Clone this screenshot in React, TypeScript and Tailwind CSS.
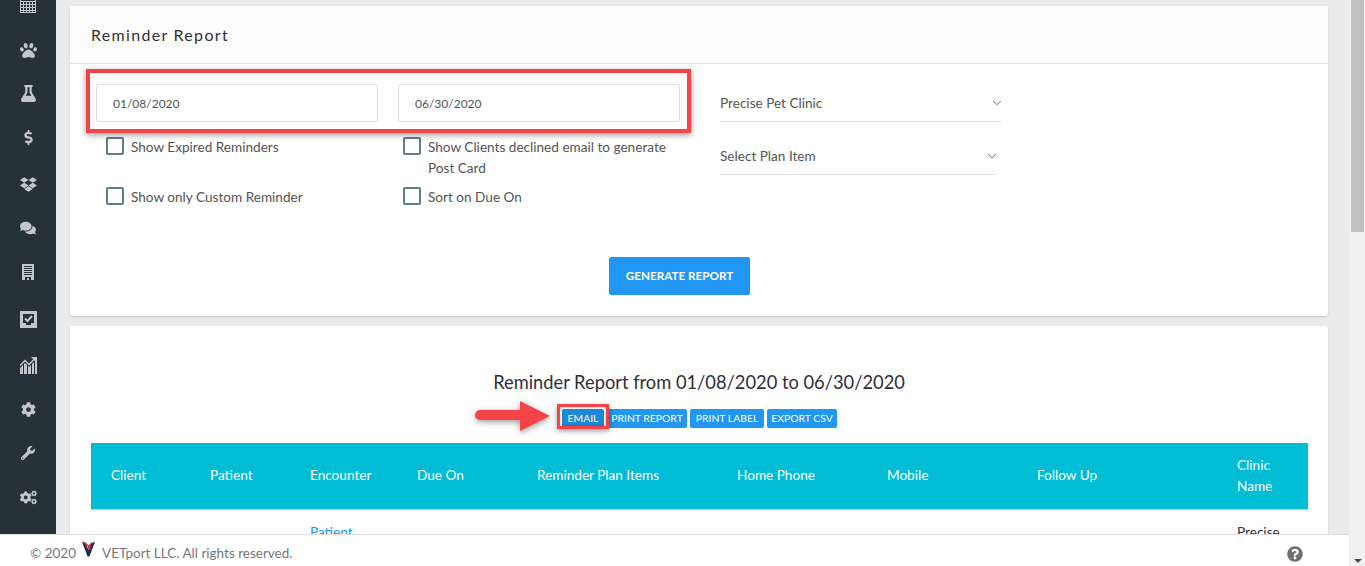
import React from "react";
import { FaPaw, FaFlask, FaDollarSign, FaDropbox, FaComments, FaCog, FaWrench, FaCogs, FaQuestionCircle } from "react-icons/fa";
import { ChevronDown } from "lucide-react";

function Check({ label }: { label: React.ReactNode }) {
  return (
    <label className="flex gap-[7px] text-[13.6px] leading-[21px] text-[#555]">
      <span className="h-[18px] w-[18px] shrink-0 rounded-[2px] border-2 border-[#607d8b]" />
      <span>{label}</span>
    </label>
  );
}

function Select({ label, w, mt }: { label: string; w: string; mt?: string }) {
  return (
    <div className={`flex h-[38px] items-center justify-between border-b border-[#ddd] pt-[1px] text-[13.6px] text-[#555] ${w} ${mt ?? ""}`}>
      <span>{label}</span>
      <ChevronDown size={14} strokeWidth={1.5} className="-mr-[3px]" />
    </div>
  );
}

function GridIcon() {
  return (
    <svg viewBox="0 0 16 16" className="h-[16px] w-[16px]" fill="none" stroke="currentColor">
      <rect x="0.5" y="0.5" width="15" height="15" strokeWidth="1" />
      <path d="M0 4.5h16M0 7.5h16M0 10.5h16M0 13.5h16M3.5 4v11M6.5 4v11M9.5 4v11M12.5 4v11" strokeWidth="1" />
    </svg>
  );
}

function ReportIcon() {
  return (
    <svg viewBox="0 0 12 16" className="h-[16px] w-[12px]" fill="currentColor">
      <path fillRule="evenodd" d="M0 0h12v16H0zM2 2v1h8V2zM2 4v1h8V4zM2 6v1h8V6zM2 8v1h8V8zM2 10v1h8v-1zM3 13v3h2v-2h2v2h2v-3z" />
    </svg>
  );
}

function CheckBoxIcon() {
  return (
    <svg viewBox="0 0 17 17" className="h-[17px] w-[17px]" fill="currentColor">
      <path fillRule="evenodd" d="M0 0h17v17H0zM3 3v9h3v2h5v-2h3V3z" />
      <path d="M5 7.5l2.5 2.5L12 5" fill="none" stroke="currentColor" strokeWidth="2" />
    </svg>
  );
}

function GrowthIcon() {
  return (
    <svg viewBox="0 0 17 17" className="h-[17px] w-[17px]" fill="currentColor">
      <path d="M0 11l3-3v9H0zM4 7l1-1 2 2v9H4zM8 9l1 1 2-2v9H8zM12 7l2-2v12h-2zM15 4h2v13h-2z" />
      <path d="M0 8.5l5-5 4 4 5-5" fill="none" stroke="currentColor" strokeWidth="1.5" />
      <path d="M11 0h6v6z" />
    </svg>
  );
}

const cols = [
  ["Client", "w-[99px]"],
  ["Patient", "w-[100px]"],
  ["Encounter", "w-[107px]"],
  ["Due On", "w-[120px]"],
  ["Reminder Plan Items", "w-[200px]"],
  ["Home Phone", "w-[150px]"],
  ["Mobile", "w-[150px]"],
  ["Follow Up", "w-[200px]"],
  ["Clinic Name", "w-[91px]"],
];

export default function App() {
  return (
    <div className="relative flex h-[566px] w-[1365px] overflow-hidden bg-[#ebebeb] font-['Lato','Noto_Sans',sans-serif]">
      <aside className="flex w-[56px] shrink-0 flex-col items-center bg-[#263238] text-[#c4c7c9]">
        <div className="-mt-[3px] flex flex-col items-center">
          <GridIcon />
          <FaPaw className="mt-[29px] text-[17px]" />
          <FaFlask className="mt-[26px] text-[17px]" />
          <FaDollarSign className="mt-[28px] text-[15px]" />
          <FaDropbox className="mt-[31px] text-[17px]" />
          <FaComments className="mt-[27px] text-[16px]" />
          <div className="mt-[28px]"><ReportIcon /></div>
          <div className="mt-[31px]"><CheckBoxIcon /></div>
          <div className="mt-[29px]"><GrowthIcon /></div>
          <FaCog className="mt-[28px] text-[15px]" />
          <FaWrench className="mt-[29px] text-[14px]" />
          <FaCogs className="mt-[29px] text-[17px]" />
        </div>
      </aside>
      <main className="relative min-w-0 flex-1 overflow-hidden pl-[14px] pr-[21px] pt-[6px]">
        <section className="h-[310px] rounded-[3px] bg-white shadow-[0_1px_2px_rgba(0,0,0,0.15)]">
          <div className="flex h-[58px] items-center border-b border-[#e3e3e3] bg-[#fcfcfc] px-[21px] text-[16px] tracking-[1.3px] text-[#333]">
            Reminder Report
          </div>
          <div className="flex pl-[26px] pt-[20px]">
            <div className="w-[282px]">
              <div className="flex h-[38px] items-center rounded-[3px] border border-[#ddd] pl-[16px] pt-[1px] text-[12px] text-[#555]">01/08/2020</div>
              <div className="pl-[10px] pt-[15px]">
                <Check label="Show Expired Reminders" />
                <div className="mt-[29px]"><Check label="Show only Custom Reminder" /></div>
              </div>
            </div>
            <div className="ml-[20px] w-[282px]">
              <div className="flex h-[38px] items-center rounded-[3px] border border-[#ddd] pl-[16px] pt-[1px] text-[12px] text-[#555]">06/30/2020</div>
              <div className="pl-[5px] pt-[15px]">
                <Check label={<>Show Clients declined email to generate<br />Post Card</>} />
                <div className="mt-[8px]"><Check label="Sort on Due On" /></div>
              </div>
            </div>
            <div className="ml-[40px]">
              <Select label="Precise Pet Clinic" w="w-[281px]" />
              <Select label="Select Plan Item" w="w-[276px]" mt="mt-[15px]" />
            </div>
          </div>
          <div className="mt-[49px] pl-[539px]">
            <button className="h-[38px] w-[141px] rounded-[2px] bg-[#2196f3] text-[11.7px] font-bold text-white">GENERATE REPORT</button>
          </div>
        </section>
        <section className="mt-[10px] h-[300px] rounded-[3px] bg-white px-[21px] pt-[44px] shadow-[0_1px_2px_rgba(0,0,0,0.15)]">
          <h2 className="text-center text-[18.3px] leading-[24px] text-[#2f2f3a]">Reminder Report from 01/08/2020 to 06/30/2020</h2>
          <div className="mt-[15px] flex justify-center gap-[3px] pl-[1px] text-[10.4px] leading-[19px] whitespace-nowrap text-white">
            <span className="flex w-[42px] justify-center rounded-[2px] bg-[#1e88d8]">EMAIL</span>
            <span className="flex w-[80px] justify-center rounded-[2px] bg-[#2196f3]">PRINT REPORT</span>
            <span className="flex w-[74px] justify-center rounded-[2px] bg-[#2196f3]">PRINT LABEL</span>
            <span className="flex w-[70px] justify-center rounded-[2px] bg-[#2196f3]">EXPORT CSV</span>
          </div>
          <table className="mt-[15px] w-[1217px] table-fixed border-collapse text-left text-[13.6px] leading-[21px]">
            <thead>
              <tr className="h-[66px] border-b border-[#c4d0d3] bg-[#00bcd4] text-white">
                {cols.map(([c, w]) => (
                  <th key={c} className={`${w} pl-[20px] pr-[10px] font-normal`}>{c}</th>
                ))}
              </tr>
            </thead>
            <tbody>
              <tr className="text-[#333]">
                <td /><td />
                <td className="pl-[20px] pt-[12px] align-top text-[#2196f3]">Patient</td>
                <td /><td /><td /><td /><td />
                <td className="pl-[20px] pt-[12px] align-top">Precise</td>
              </tr>
            </tbody>
          </table>
        </section>
      </main>
      <div className="relative w-[16px] shrink-0 bg-[#f1f1f1]">
        <div className="ml-[2px] h-[232px] w-[13px] bg-[#c1c1c1]" />
        <div className="absolute bottom-[3px] left-[5px] h-0 w-0 border-x-[4px] border-t-[4px] border-x-transparent border-t-[#505050]" />
      </div>
      <footer className="absolute bottom-0 left-0 flex h-[32px] w-[1349px] items-center border-t border-[#ddd] bg-white pl-[30px] pt-[5px] text-[13.5px] text-[#777]">
        <span>© 2020</span>
        <svg viewBox="0 0 16 18" className="ml-[5px] mr-[6px] mb-[8px] h-[18px] w-[15px]">
          <path d="M1 1l6 16h2l6-16-4 2-3 7-3-7z" fill="#1d2b52" />
          <path d="M3 1l2 1 3 3 4-4-2 6-2 3-1-4-3-2zM7 6l4 3-2 1z" fill="#e0333c" />
        </svg>
        <span>VETport LLC. All rights reserved.</span>
        <FaQuestionCircle className="absolute left-[1287px] top-[11px] text-[16px] text-[#6f6f6f]" />
      </footer>
      {/* Tutorial annotations overlaying the page */}
      <div className="pointer-events-none absolute left-[86px] top-[69px] h-[64px] w-[605px] border-4 border-[#f44448] shadow-[0_2px_6px_rgba(0,0,0,0.4)]" />
      <div className="pointer-events-none absolute left-[557px] top-[404px] h-[25px] w-[52px] border-[3px] border-[#f44448] shadow-[0_2px_5px_rgba(0,0,0,0.4),inset_0_0_3px_rgba(0,0,0,0.35)]" />
      <svg viewBox="0 0 80 36" className="pointer-events-none absolute left-[474px] top-[401px] h-[36px] w-[80px] drop-shadow-[0_2px_3px_rgba(0,0,0,0.4)]">
        <path d="M6 9H46V0L76 15 46 30V19H6a5 5 0 0 1 0-10z" fill="#f44448" />
      </svg>
    </div>
  );
}
